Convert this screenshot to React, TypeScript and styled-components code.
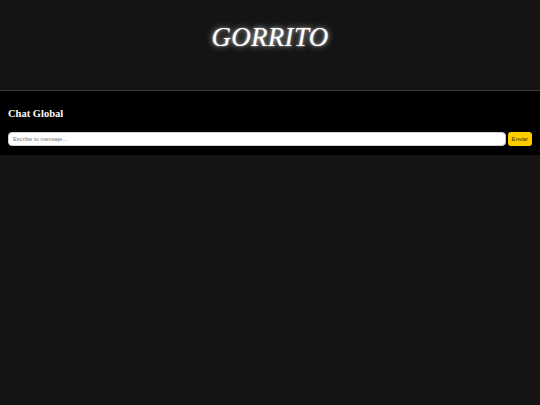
import React from "react";
import styled, { createGlobalStyle } from "styled-components";

const Global = createGlobalStyle`
  html, body { margin: 0; padding: 0; background: #141414; }
  body { font-family: "Liberation Serif", "Times New Roman", serif; }
`;

const Header = styled.header`
  height: 90px;
  display: flex;
  justify-content: center;
  align-items: flex-start;
  border-bottom: 1px solid #3c3c3c;
  background: #141414;
`;

const Logo = styled.h1`
  margin: 20px 0 0;
  font-family: "Liberation Serif", "Times New Roman", serif;
  font-style: italic;
  font-weight: normal;
  font-size: 27px;
  line-height: 34px;
  color: #ffffff;
  letter-spacing: 0.3px;
  text-shadow: 0 0 6px rgba(255, 255, 255, 0.75), 0 0 2px rgba(255, 255, 255, 0.6);
`;

const ChatSection = styled.section`
  background: #000000;
  padding: 16px 8px 9px 8px;
`;

const ChatTitle = styled.h2`
  margin: 0 0 12px;
  font-size: 10.5px;
  line-height: 13px;
  font-weight: bold;
  color: #ffffff;
`;

const Form = styled.form`
  display: flex;
  gap: 2px;
  align-items: stretch;
`;

const Input = styled.input`
  flex: 1;
  height: 14px;
  box-sizing: border-box;
  border: 1px solid #cfcfcf;
  border-radius: 4px;
  background: #ffffff;
  padding: 0 4px;
  font-family: "Liberation Sans", Arial, sans-serif;
  font-size: 5.8px;
  outline: none;
  &::placeholder { color: #777777; }
`;

const SendButton = styled.button`
  height: 14px;
  box-sizing: border-box;
  border: none;
  border-radius: 3px;
  background: #ffcc00;
  color: #3a2f00;
  font-family: "Liberation Sans", Arial, sans-serif;
  font-size: 5.8px;
  padding: 0 4px;
  cursor: pointer;
`;

export default function App() {
  return (
    <>
      <Global />
      <Header>
        <Logo>GORRITO</Logo>
      </Header>
      <ChatSection>
        <ChatTitle>Chat Global</ChatTitle>
        <Form onSubmit={(e) => e.preventDefault()}>
          <Input placeholder="Escribe tu mensaje..." />
          <SendButton type="submit">Enviar</SendButton>
        </Form>
      </ChatSection>
    </>
  );
}
